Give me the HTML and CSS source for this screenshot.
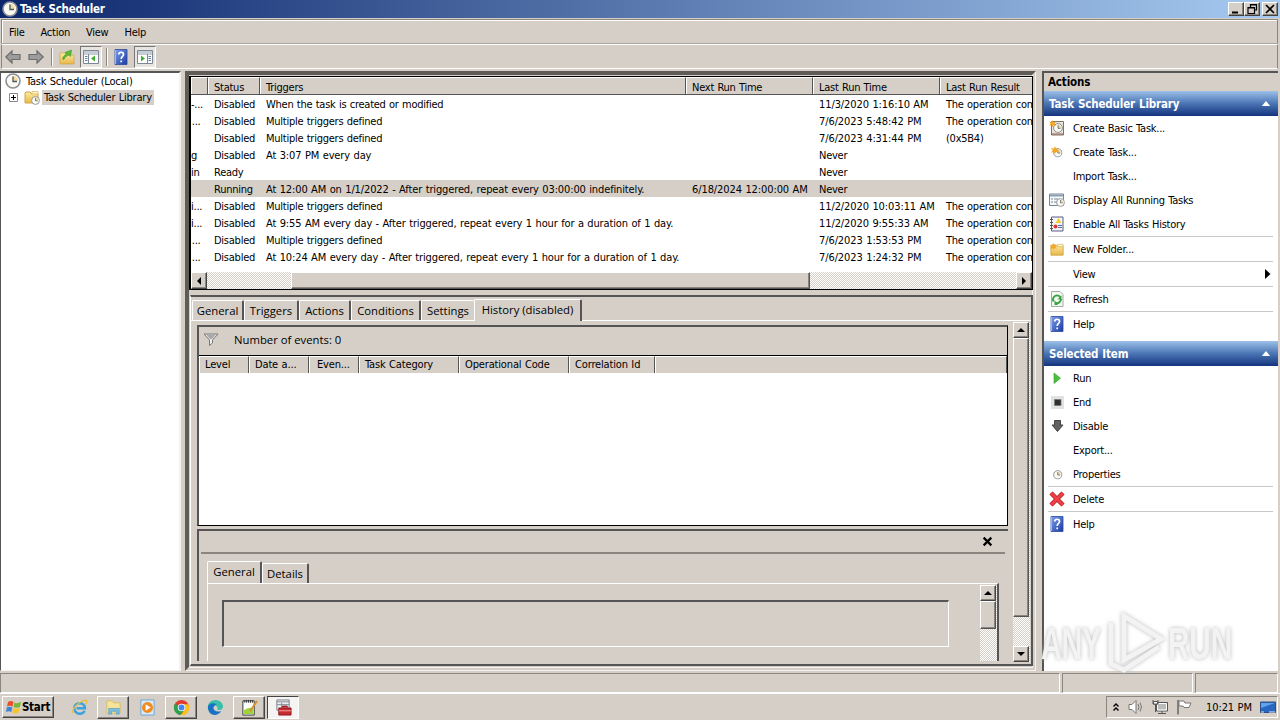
FILE: index.html
```html
<!DOCTYPE html>
<html lang="en">
<head>
  <meta charset="UTF-8">
  <title>Task Scheduler</title>
  <link rel="stylesheet" href="styles.css">
</head>
<body>

  <svg class="defs">
    <defs>
      <linearGradient id="blue" x2="1" y2="1"><stop offset="0" stop-color="#7da2ee"/><stop offset="1" stop-color="#1b3aa0"/></linearGradient>
      <linearGradient id="folderfill" y2="1" x2="0"><stop offset="0" stop-color="#fdebA0"/><stop offset="1" stop-color="#e8b84a"/></linearGradient>
    </defs>
    <symbol id="clock" viewBox="0 0 16 16">
      <circle cx="8" cy="8" r="7" fill="#fafaf2" stroke="#8b8f96" stroke-width="1.6"/>
      <path d="M8 8V3A5 5 0 0 1 13 8z" fill="#f3dca0"/>
      <path d="M8 3.5V8.5H12" fill="none" stroke="#4d5966" stroke-width="1.3"/>
    </symbol>
    <symbol id="folder" viewBox="0 0 16 16">
      <path d="M1 4L2 3H6L7 4.500H14V14H1z" fill="url(#folderfill)" stroke="#d1a548"/>
      <path d="M8 2.500H14V5H8z" fill="#fff5c8" stroke="#d8b45c" stroke-width=".7"/>
    </symbol>
    <symbol id="star" viewBox="0 0 8 8">
      <path d="M4 0L5 2.500L8 2L6.200 4.200L8 6.500L5 6L4 8L3 6L0 6.500L1.800 4.200L0 2L3 2.500z" fill="#f5a623"/>
    </symbol>
    <symbol id="help" viewBox="0 0 16 16">
      <path d="M2 .5H14V15.500H2z" fill="url(#blue)" stroke="#2846a0" stroke-width=".8"/>
      <path d="M2.500 1V15" stroke="#9db7f0"/>
      <path d="M5.800 5.600C5.800 2.500 10.500 2.500 10.500 5.400C10.500 7.500 8.200 7.400 8.200 10M8.200 11.500V13.200" fill="none" stroke="#fff" stroke-width="1.7"/>
    </symbol>
    <symbol id="arrow" viewBox="0 0 16 16">
      <path d="M.8 8L7 2V5.500H15V10.500H7V14z" fill="#9c9c9c" stroke="#6d6d6d" stroke-width="1.200"/>
    </symbol>
    <symbol id="pane" viewBox="0 0 16 16">
      <path d="M.5 1.500H15.500V14.500H.5z" fill="#fff" stroke="#7b8794"/>
      <path d="M1 3H15M1 5H15" stroke="#8f9cab" stroke-width="1.200"/>
      <path d="M5.500 5V14" stroke="#7b8794"/>
      <path d="M2 7.500H4.500M2 9.500H4.500M2 11.500H4.500" stroke="#5f7fa8"/>
      <path d="M12 6.500V12.500L8 9.500z" fill="#3fae2f"/>
    </symbol>
  </svg>

  <header class="titlebar">
    <svg class="i16"><use href="#clock"/></svg>
    <span>Task Scheduler</span>
    <div class="winbtns">
      <button><svg viewBox="0 0 12 10"><path d="M2 8.500H8" stroke="#000" stroke-width="2"/></svg></button>
      <button><svg viewBox="0 0 12 10"><path d="M4.500 3V.5H10.500V6H8.500M4 1H11M2 3.500H8.500V9.500H2zM1.500 4H9" fill="none" stroke="#000" stroke-width="1.200"/></svg></button>
      <button class="gap"><svg viewBox="0 0 12 10"><path d="M2 1L10 9M10 1L2 9" stroke="#000" stroke-width="1.700"/></svg></button>
    </div>
  </header>

  <nav class="menu"><span>File</span><span>Action</span><span>View</span><span>Help</span></nav>

  <div class="toolbar">
    <svg class="tool"><use href="#arrow"/></svg>
    <svg class="tool flip fwd"><use href="#arrow"/></svg>
    <i class="tsep"></i>
    <svg class="tool" viewBox="0 0 16 16"><path d="M1 4H6L7.500 6H15V15H1z" fill="url(#folderfill)" stroke="#d0a347" stroke-width=".7"/><path d="M3.500 10C4 7 6 6 7.500 5L6 3.500L12.500 1L11.500 7.500L9.800 6C7.500 7 6 8 5 10.500z" fill="#58bd32" stroke="#3a8f20" stroke-width=".5"/></svg>
    <span class="pressed"><svg class="i16"><use href="#pane"/></svg></span>
    <i class="tsep second"></i>
    <svg class="tool help"><use href="#help"/></svg>
    <span class="pressed"><svg class="i16 flip"><use href="#pane"/></svg></span>
  </div>

  <main class="workspace">
    <section class="tree">
      <div class="node"><svg class="i16"><use href="#clock"/></svg><span>Task Scheduler (Local)</span></div>
      <div class="node child">
        <svg class="plus" viewBox="0 0 9 9"><path d="M.5 .5H8.500V8.500H.5z" fill="#fff" stroke="#888"/><path d="M2 4.500H7M4.500 2V7" stroke="#000"/></svg>
        <svg class="i16" viewBox="0 0 16 16"><use href="#folder"/><use href="#clock" x="7" y="7" width="9" height="9"/></svg>
        <span class="picked">Task Scheduler Library</span>
      </div>
    </section>

    <section class="center">
      <div class="tasks">
        <div class="trow thead"><span></span><span>Status</span><span>Triggers</span><span>Next Run Time</span><span>Last Run Time</span><span>Last Run Result</span></div>
        <div class="trow"><span>-...</span><span>Disabled</span><span>When the task is created or modified</span><span></span><span class="date">11/3/2020 1:16:10 AM</span><span>The operation com</span></div>
        <div class="trow"><span>&#8202;...</span><span>Disabled</span><span>Multiple triggers defined</span><span></span><span class="date">7/6/2023 5:48:42 PM</span><span>The operation com</span></div>
        <div class="trow"><span></span><span>Disabled</span><span>Multiple triggers defined</span><span></span><span class="date">7/6/2023 4:31:44 PM</span><span>(0x5B4)</span></div>
        <div class="trow"><span>g</span><span>Disabled</span><span class="long">At 3:07 PM every day</span><span></span><span>Never</span><span></span></div>
        <div class="trow"><span>in</span><span>Ready</span><span></span><span></span><span>Never</span><span></span></div>
        <div class="trow on"><span></span><span>Running</span><span class="long">At 12:00 AM on 1/1/2022 - After triggered, repeat every 03:00:00 indefinitely.</span><span class="date">6/18/2024 12:00:00 AM</span><span>Never</span><span></span></div>
        <div class="trow"><span>i...</span><span>Disabled</span><span>Multiple triggers defined</span><span></span><span class="date">11/2/2020 10:03:11 AM</span><span>The operation com</span></div>
        <div class="trow"><span>i...</span><span>Disabled</span><span class="long">At 9:55 AM every day - After triggered, repeat every 1 hour for a duration of 1 day.</span><span></span><span class="date">11/2/2020 9:55:33 AM</span><span>The operation com</span></div>
        <div class="trow"><span>&#8202;...</span><span>Disabled</span><span>Multiple triggers defined</span><span></span><span class="date">7/6/2023 1:53:53 PM</span><span>The operation com</span></div>
        <div class="trow"><span>&#8202;...</span><span>Disabled</span><span class="long">At 10:24 AM every day - After triggered, repeat every 1 hour for a duration of 1 day.</span><span></span><span class="date">7/6/2023 1:24:32 PM</span><span>The operation com</span></div>
        <div class="hscroll">
          <button><svg viewBox="0 0 10 10"><path d="M7 1V9L3 5z"/></svg></button>
          <i class="thumb"></i>
          <button><svg viewBox="0 0 10 10"><path d="M3 1V9L7 5z"/></svg></button>
        </div>
      </div>

      <div class="details">
        <div class="tabs">
          <span class="w1">General</span><span class="w2">Triggers</span><span class="w3">Actions</span><span class="w4">Conditions</span><span class="w5">Settings</span><span class="active">History (disabled)</span>
        </div>
        <div class="page">
          <div class="history">
            <div class="events">
              <div class="count">
                <svg class="i16" viewBox="0 0 16 16"><path d="M1 2H15L9.500 8V11L6.500 13.500V8z" fill="#eee" stroke="#777"/><path d="M3 2.500H13L9 7H7z" fill="#aaa"/></svg>
                <span>Number of events: 0</span>
              </div>
              <div class="ehead"><span>Level</span><span>Date a...</span><span>Even...</span><span>Task Category</span><span>Operational Code</span><span>Correlation Id</span><span></span></div>
              <div class="ebody"></div>
            </div>
            <div class="preview">
              <div class="closebar"><svg viewBox="0 0 10 10"><path d="M1.500 1.500L8.500 8.500M8.500 1.500L1.500 8.500" stroke="#000" stroke-width="2"/></svg></div>
              <div class="subtabs"><span class="active">General</span><span>Details</span></div>
              <div class="subpage">
                <div class="textbox"></div>
                <div class="vscroll small">
                  <button><svg viewBox="0 0 10 10"><path d="M1 7H9L5 3z"/></svg></button>
                  <i class="thumb"></i>
                </div>
              </div>
            </div>
          </div>
          <div class="vscroll">
            <button><svg viewBox="0 0 10 10"><path d="M1 7H9L5 3z"/></svg></button>
            <i class="thumb"></i>
            <button class="last"><svg viewBox="0 0 10 10"><path d="M1 3H9L5 7z"/></svg></button>
          </div>
        </div>
      </div>
    </section>

    <aside class="actions">
      <h2>Actions</h2>
      <h3>Task Scheduler Library<svg viewBox="0 0 10 6"><path d="M0 6H10L5 0z" fill="#fff"/></svg></h3>
      <ul>
        <li><svg class="i16" viewBox="0 0 16 16"><path d="M2.500 1.500H14.500V15H2.500z" fill="#e8e4dc" stroke="#7d7468"/><path d="M3 14H14" stroke="#9a5b4d"/><use href="#clock" x="4" y="3" width="10" height="10"/><use href="#star" width="7" height="7"/></svg>Create Basic Task...</li>
        <li><svg class="i16" viewBox="0 0 16 16"><use href="#clock" x="4" y="4" width="9.500" height="9.500"/><use href="#star" x="2" y="2" width="8" height="8"/></svg>Create Task...</li>
        <li>Import Task...</li>
        <li><svg class="i16" viewBox="0 0 16 16"><path d="M.5 2H14.500V13.500H.5z" fill="#f7faf8" stroke="#7a8794"/><path d="M1 3.500H14" stroke="#8aa0b5" stroke-width="2"/><path d="M2 7H4M5 7H9M2 10H4M5 10H8" stroke="#6e8a9e"/><use href="#clock" x="7" y="6" width="9" height="9"/></svg>Display All Running Tasks</li>
        <li><svg class="i16" viewBox="0 0 16 16"><path d="M2.500 1H14V15H2.500z" fill="#f6f3f8" stroke="#565f86"/><path d="M9.500 2L12.500 7H6.500z" fill="#f4cf27"/><path d="M1 3.500H4M1 6.500H4M1 9.500H4M1 12.500H4" stroke="#555"/><circle cx="6.500" cy="10.500" r="2" fill="#d43c2c"/><path d="M9 9.500H13M9 11.500H13" stroke="#4f6fb5"/></svg>Enable All Tasks History</li>
        <li class="line"><svg class="i16" viewBox="0 0 16 16"><use href="#folder" y="1" x="1" width="15" height="15"/><use href="#star" x="1" y="2" width="7" height="7"/></svg>New Folder...</li>
        <li class="line">View<svg class="more" viewBox="0 0 6 10"><path d="M0 0V10L5.500 5z"/></svg></li>
        <li class="line"><svg class="i16" viewBox="0 0 16 16"><path d="M2.500 .5H11L14 3.500V15.500H2.500z" fill="#f4f8f2" stroke="#a1ada0"/><path d="M4.500 10.500A4 4 0 0 1 11.500 6.500M12 8A4 4 0 0 1 6.500 11.800" fill="none" stroke="#35a33f" stroke-width="1.900"/><path d="M12.500 8.500H8.500L12.500 4.500zM5.500 9V14H9z" fill="#35a33f"/></svg>Refresh</li>
        <li class="line"><svg class="i16"><use href="#help"/></svg>Help</li>
      </ul>
      <h3 class="next">Selected Item<svg viewBox="0 0 10 6"><path d="M0 6H10L5 0z" fill="#fff"/></svg></h3>
      <ul>
        <li><svg class="i16" viewBox="0 0 16 16"><path d="M5 3V13.500L11.500 8.200z" fill="#4ac03c" stroke="#2f9a2b" stroke-width=".6"/></svg>Run</li>
        <li><svg class="i16" viewBox="0 0 16 16"><path d="M2 2H15V15H2z" fill="#e1e2e4"/><path d="M5.500 5.500H12V11.500H5.500z" fill="#303030" stroke="#777" stroke-width=".7"/></svg>End</li>
        <li><svg class="i16" viewBox="0 0 16 16"><path d="M5.500 2.500H11.500V7H14L8.500 13.500L3 7H5.500z" fill="#626262" stroke="#444"/></svg>Disable</li>
        <li>Export...</li>
        <li><svg class="i16" viewBox="0 0 16 16"><use href="#clock" x="4" y="4" width="9.500" height="9.500"/></svg>Properties</li>
        <li class="line"><svg class="i16" viewBox="0 0 16 16"><path d="M2 2L14 14M14 2L2 14" stroke="#b31a20" stroke-width="4.500"/><path d="M2 2L14 14M14 2L2 14" stroke="#ee4046" stroke-width="3"/></svg>Delete</li>
        <li class="line"><svg class="i16"><use href="#help"/></svg>Help</li>
      </ul>
      <svg class="watermark" viewBox="0 0 194 64">
        <g fill="#f3f3f3">
          <text x="1" y="49" textLength="60" lengthAdjust="spacingAndGlyphs">ANY</text>
          <text x="128" y="49" textLength="64" lengthAdjust="spacingAndGlyphs">RUN</text>
        </g>
        <g fill="none" stroke="#f3f3f3" stroke-width="5"><path d="M84 6L121 29L84 50z"/><path d="M71 13V54L84 60L119 37"/></g>
      </svg>
    </aside>
  </main>

  <div class="status"><span></span><span></span><span></span></div>

  <footer class="taskbar">
    <button class="start">
      <svg viewBox="0 0 16 16"><path d="M2 3Q5 1 7.500 3L6.500 7.500Q4 6 1 7.500z" fill="#e8502b"/><path d="M8.500 3.500Q11 5 15 3L14 8Q10.500 9.500 7.500 8z" fill="#7ab738"/><path d="M.8 8.500Q4 7 6.300 8.500L5.300 13Q3 11.500 0 13z" fill="#3b83d6"/><path d="M7.300 9Q10.500 10.500 13.700 9L12.500 13.500Q9 15.500 6.200 13.500z" fill="#f7c42c"/></svg>Start
    </button>
    <div class="apps">
      <span><svg viewBox="0 0 18 18"><path d="M14.500 12.500C11 18 3.500 15.500 3.500 9.500C3.500 3 14.500 2.500 14.800 9.800H6" fill="none" stroke="#3ba3df" stroke-width="2.600"/><path d="M2 15C-1 12 10 1 16 1.500C18 2 16 5 15 6" fill="none" stroke="#e9be3c" stroke-width="1.300"/></svg></span>
      <span class="raised"><svg viewBox="0 0 18 18"><path d="M2 2H8L9 4H16V15H2z" fill="#f7e49b" stroke="#d9bd62"/><path d="M4 16V10H15V16H12V13H7V16z" fill="#7fbfe2" stroke="#4c96bf" stroke-width=".7"/></svg></span>
      <span><svg viewBox="0 0 18 18"><path d="M2 1H16V17H2z" fill="#d5e9f8" stroke="#6aa6d2"/><circle cx="9" cy="9" r="5.800" fill="#f28a1c"/><path d="M7 5.500V12.500L12.500 9z" fill="#fff"/></svg></span>
      <span class="raised"><svg viewBox="0 0 18 18"><circle cx="9" cy="9" r="8" fill="#e23b2e"/><path d="M9 9L2 5A8 8 0 0 0 8 17L12 11z" fill="#2da24c"/><path d="M8 17A8 8 0 0 0 16.200 5.500H9L12.500 11z" fill="#fbc116"/><circle cx="9" cy="9" r="4" fill="#fff"/><circle cx="9" cy="9" r="3.100" fill="#4386ef"/></svg></span>
      <span><svg viewBox="0 0 18 18"><path d="M1 10C0 4 5 1 9 1C14 1 17 5 17 8C17 12 12 12.500 11 11C12 8 9 6 6 7C3 8 1 10 1 10z" fill="#38bfa9"/><path d="M1 9C1 5 7 3 10 6C4 8 7 15 15 13C10 20 1 17 1 9z" fill="#1973c4"/></svg></span>
      <span class="raised"><svg viewBox="0 0 18 18"><path d="M2 2H14V17H2z" fill="#fff" stroke="#333"/><path d="M4 1V4M6 1V4M8 1V4M10 1V4M12 1V4" stroke="#333"/><path d="M3 12Q8 8 13 10V16H3z" fill="#9ed33d"/><path d="M17 2L9.500 13" stroke="#d69128" stroke-width="2"/></svg></span>
      <span class="sunk"><svg viewBox="0 0 18 18"><path d="M2 1H15V12H2z" fill="#edf1f4" stroke="#727d87"/><path d="M2 3H15M2 6H15M7 4V10" stroke="#7d8790"/><path d="M8 9V7.500H13V9M4 9.500H17V17H4z" fill="#c62c32" stroke="#8e171e"/><path d="M4 12.500H17" stroke="#f3b0a9"/></svg></span>
    </div>
    <div class="tray">
      <svg class="chev" viewBox="0 0 8 10"><path d="M1.500 4.500L4 2L6.500 4.500M1.500 8.500L4 6L6.500 8.500" fill="none" stroke="#000" stroke-width="1.400"/></svg>
      <svg viewBox="0 0 16 16"><path d="M1 5.500H4L8 1.500V14.500L4 10.500H1z" fill="#fff" stroke="#777"/><path d="M10 5Q12 8 10 11M12 3.500Q15 8 12 12.500" fill="none" stroke="#777"/></svg>
      <svg viewBox="0 0 16 16"><path d="M4.500 3.500H15.500V12H4.500z" fill="#bbb" stroke="#555"/><path d="M5.500 4.500H14.500V11H5.500z" fill="none" stroke="#fff"/><path d="M10 12V14M6 14.500H14" stroke="#555"/><path d="M1 1V5H6V1M3.500 5V13" fill="none" stroke="#555"/><path d="M1.500 2.500H5.500V5H1.500z" fill="#fff" stroke="#555"/></svg>
      <svg viewBox="0 0 16 16"><path d="M2 1V15.500" stroke="#666" stroke-width="1.500"/><path d="M3 2H8L9 4H15L13 8.500H8L7 7H3z" fill="#fff" stroke="#777"/></svg>
      <span>10:21 PM</span>
      <svg class="desk" viewBox="0 0 16 16"><path d="M.5 3H15.500V13.500H.5z" fill="#2867bf" stroke="#2e4f83"/><path d="M1 4H15L1 9z" fill="#63a1ea"/><path d="M1 13H4M9 13H15" stroke="#dce8f6"/></svg>
    </div>
  </footer>

</body>
</html>
```
FILE: styles.css
```css
* {
  box-sizing: border-box;
}
body {
  margin: 0;
  width: 1280px;
  height: 720px;
  overflow: hidden;
  display: flex;
  flex-direction: column;
  background: #d5cfc8;
  color: #000;
  font-family: Tahoma, "DejaVu Sans Condensed", "DejaVu Sans", sans-serif;
  font-size: 11px;
  font-stretch: condensed;
  letter-spacing: -0.25px;
  word-spacing: 0.5px;
  white-space: nowrap;
}
svg {
  display: block;
  flex: none;
}
.defs {
  width: 0;
  height: 0;
  position: absolute;
}
.i16 {
  width: 16px;
  height: 16px;
}
.flip {
  transform: scaleX(-1);
}
button {
  padding: 0;
  font: inherit;
  letter-spacing: inherit;
  background: #d5cfc8;
  border: 1px solid;
  border-color: #fff #444 #444 #fff;
  box-shadow: inset -1px -1px #8a857e;
  display: flex;
  align-items: center;
  justify-content: center;
}

/* title, menu, toolbar */
.titlebar {
  height: 18px;
  flex: none;
  display: flex;
  align-items: center;
  gap: 2px;
  padding-left: 2px;
  background: linear-gradient(90deg, #0c266c, #a6caf0);
  color: #fff;
  font-weight: bold;
  font-size: 11.5px;
}
.winbtns {
  margin-left: auto;
  display: flex;
  padding-right: 2px;
}
.winbtns button {
  width: 16px;
  height: 14px;
}
.winbtns svg {
  width: 12px;
  height: 10px;
}
.winbtns .gap {
  margin-left: 2px;
}
.menu {
  height: 25px;
  flex: none;
  margin: 1px 2px 0 1px;
  border-top: 1px solid #8a857e;
  border-left: 1px solid #8a857e;
  border-right: 1px solid #8a857e;
  box-shadow: inset 1px 1px #fff;
  display: flex;
  align-items: center;
  gap: 16px;
  padding-left: 7px;
}
.toolbar {
  height: 25px;
  flex: none;
  margin: 0 2px 0 1px;
  border: 1px solid #8a857e;
  border-top-color: #fff;
  border-bottom-color: #fff;
  display: flex;
  align-items: center;
  padding-left: 3px;
  box-shadow: 0 -1px #aaa59e;
}
.tool {
  width: 16px;
  height: 16px;
}
.fwd {
  margin-left: 7px;
}
.tsep {
  width: 2px;
  height: 18px;
  margin: 0 6px 0 7px;
  border-left: 1px solid #8a857e;
  border-right: 1px solid #fff;
}
.tsep.second {
  margin: 0 5px 0 4px;
}
.pressed {
  width: 22px;
  height: 22px;
  margin-left: 5px;
  border: 1px solid;
  border-color: #777 #fff #fff #777;
  background: #e8e5e1;
  display: flex;
  align-items: center;
  justify-content: center;
}

/* three panes */
.workspace {
  height: 600px;
  flex: none;
  margin-top: 2px;
  display: flex;
}
.tree {
  width: 181px;
  height: 600px;
  border: 1px solid;
  border-width: 2px 2px 1px 1px;
  border-color: #555 #f4f2ef #f4f2ef #555;
  background: #fff;
  padding-left: 4px;
  letter-spacing: -0.22px;
}
.node {
  height: 16px;
  display: flex;
  align-items: center;
  gap: 5px;
}
.child {
  padding-left: 4px;
}
.plus {
  width: 9px;
  height: 9px;
}
.child .i16 {
  margin-left: 1px;
}
.picked {
  background: #d5cfc8;
  padding: 1px 2px;
  margin-left: -3px;
}

.center {
  width: 851px;
  margin-left: 4px;
  border: 4px double;
  border-color: #5f5b57 #f4f2ef #f4f2ef #5f5b57;
  border-left-style: solid;
  border-top-style: solid;
  padding-top: 1px;
}
.tasks {
  width: 844px;
  height: 214px;
  border: 1px solid #000;
  border-left-width: 2px;
  background: #fff;
  overflow: hidden;
  display: flex;
  flex-direction: column;
}
.trow {
  height: 17px;
  flex: none;
  display: grid;
  grid-template-columns: 17px 52px 426px 127px 127px 92px;
  line-height: 15px;
}
.trow span {
  overflow: hidden;
  padding: 2px 0 0 6px;
}
.trow span:first-child {
  padding-left: 0;
}
.trow .long {
  letter-spacing: -0.13px;
}
.trow .date {
  letter-spacing: -0.1px;
}
.on {
  background: #d5cfc8;
}
.thead {
  height: 18px;
  border-bottom: 1px solid #555;
}
.thead span,
.ehead span {
  background: #d5cfc8;
  border: 1px solid;
  border-color: #fff #555 #999 #fff;
  border-bottom: 0;
  padding-left: 5px;
  line-height: 15px;
}
.thead span:last-child {
  border-right: 0;
}
.ehead span {
  line-height: 16px;
  letter-spacing: -0.15px;
}
.hscroll {
  height: 17px;
  margin-top: 7px;
  display: flex;
}
.hscroll,
.vscroll {
  background: repeating-conic-gradient(#fff 0 25%, #d5cfc8 0 50%) 0 0 / 2px 2px;
}
.hscroll button {
  width: 16px;
}
.hscroll svg,
.vscroll svg {
  width: 10px;
  height: 10px;
}
.thumb {
  background: #d5cfc8;
  border: 1px solid;
  border-color: #fff #555 #555 #fff;
  box-shadow: inset -1px -1px #8a857e;
}
.hscroll .thumb {
  width: 519px;
  margin: 0 auto 0 84px;
}

/* lower half: tabs and event list */
.details {
  margin-top: 5px;
  margin-left: 1px;
  width: 843px;
  height: 371px;
  border: 2px solid #555;
  border-left: 1px solid #fff;
  padding-top: 2px;
}
.tabs {
  display: flex;
  height: 22px;
  align-items: flex-end;
  padding-left: 1px;
  border-bottom: 1px solid #fff;
}
.tabs span,
.subtabs span,
.count {
  font-family: "Open Sans", "Noto Sans", sans-serif;
  font-stretch: normal;
  font-size: 11.3px;
  letter-spacing: 0;
  word-spacing: 0;
}
.tabs span,
.subtabs span {
  height: 20px;
  border-top: 1px solid #fff;
  border-left: 1px solid #fff;
  border-right: 2px solid #555;
  border-radius: 2px 2px 0 0;
  text-align: center;
  line-height: 20px;
}
.tabs .w1 { width: 52px; }
.tabs .w2 { width: 55px; }
.tabs .w3 { width: 52px; }
.tabs .w4 { width: 70px; }
.tabs .w5 { width: 53px; border-right: 0; }
.tabs .active {
  width: 108px;
  height: 22px;
  margin-bottom: -1px;
  line-height: 19px;
  background: #d5cfc8;
}
.page {
  display: flex;
  height: 341px;
  overflow: hidden;
}
.history {
  width: 811px;
  margin-left: 6px;
  padding-top: 4px;
}
.events {
  height: 201px;
  border: 2px solid #555;
  border-right-width: 1px;
  border-bottom-width: 1px;
  border-color: #555 #000 #000 #555;
}
.count {
  height: 28px;
  display: flex;
  align-items: center;
  gap: 15px;
  padding: 0 0 3px 4px;
}
.ehead {
  display: grid;
  grid-template-columns: 50px 60px 50px 100px 110px 86px 1fr;
  height: 18px;
  border-top: 1px solid #000;
  border-bottom: 1px solid #555;
}
.ehead span:nth-child(3) {
  padding-left: 7px;
}
.ebody {
  height: 152px;
  background: #fff;
}
.preview {
  margin-top: 3px;
  height: 132px;
  border-top: 2px solid #555;
  border-left: 2px solid #555;
  overflow: hidden;
}
.closebar {
  height: 23px;
  margin: 0 3px 0 2px;
  border-bottom: 2px solid #8a857e;
  display: flex;
  justify-content: flex-end;
  align-items: center;
  padding-right: 12px;
}
.closebar svg {
  width: 11px;
  height: 11px;
}
.subtabs {
  display: flex;
  align-items: flex-end;
  height: 29px;
  margin-left: 8px;
}
.subtabs span {
  width: 47px;
}
.subtabs .active {
  width: 55px;
  height: 22px;
}
.subpage {
  display: flex;
  justify-content: space-between;
  height: 100px;
  width: 792px;
  margin-left: 8px;
  border: 1px solid #fff;
  border-right: 2px solid #555;
  padding-left: 14px;
}
.textbox {
  width: 727px;
  height: 47px;
  margin-top: 16px;
  border: 2px solid #555;
  border-right: 1px solid #fff;
  border-bottom: 1px solid #fff;
}
.vscroll {
  width: 17px;
  margin: 1px 0 0 5px;
  display: flex;
  flex-direction: column;
}
.vscroll button {
  height: 16px;
  width: 16px;
}
.vscroll .thumb {
  width: 16px;
  height: 279px;
}
.vscroll .last {
  margin-top: auto;
}
.vscroll.small {
  margin-left: 0;
}
.vscroll.small .thumb {
  height: 28px;
}

/* actions pane */
.actions {
  width: 236px;
  height: 600px;
  margin-left: 6px;
  border-left: 2px solid #555;
  border-top: 2px solid #555;
  background: #fff;
  position: relative;
}
.actions h2,
.actions h3 {
  margin: 0;
  font-size: 11.5px;
  letter-spacing: -0.15px;
}
.actions h2 {
  height: 18px;
  line-height: 18px;
  padding-left: 4px;
  background: #d5cfc8;
}
.actions h3 {
  height: 25px;
  display: flex;
  align-items: center;
  justify-content: space-between;
  padding: 0 7px 0 5px;
  background: linear-gradient(#9cc0e8, #4b75b5 50%, #14347e);
  color: #fff;
}
.actions h3 svg {
  width: 10px;
  height: 5px;
}
.actions .next {
  margin-top: 5px;
}
.actions ul {
  list-style: none;
  margin: 0 5px 0 4px;
  padding: 0;
}
.actions li {
  height: 24px;
  line-height: 22px;
  display: flex;
  align-items: center;
  padding: 2px 0 0 25px;
}
.actions li .i16 {
  margin: -2px 8px 0 -24px;
}
.actions .line {
  height: 25px;
  border-top: 1px solid #c8c8c8;
}
.more {
  width: 6px;
  height: 10px;
  margin: -2px 2px 0 auto;
}
.watermark {
  position: absolute;
  left: -4px;
  top: 537px;
  width: 194px;
  height: 64px;
  filter: drop-shadow(0 0 2px #bbb);
}
.watermark text {
  font: bold 45px "Liberation Sans", sans-serif;
}

/* status and task bar */
.status {
  height: 20px;
  flex: none;
  margin-top: 2px;
  display: grid;
  grid-template-columns: 1060px 131px 1fr;
  gap: 2px;
  padding-right: 2px;
}
.status span {
  border: 1px solid;
  border-color: #8a857e #fff #fff #8a857e;
}
.taskbar {
  flex: 1;
  border-top: 1px solid #fff;
  display: flex;
  align-items: center;
  padding: 0 2px;
}
.start {
  width: 52px;
  height: 22px;
  font-weight: bold;
  font-size: 11.5px;
}
.start svg {
  width: 16px;
  height: 16px;
}
.apps {
  display: flex;
  gap: 2px;
  margin-left: 9px;
}
.apps span {
  width: 32px;
  height: 23px;
  display: flex;
  align-items: center;
  justify-content: center;
}
.apps svg {
  width: 17px;
  height: 17px;
}
.apps .raised {
  border: 1px solid;
  border-color: #fff #444 #444 #fff;
  box-shadow: inset -1px -1px #8a857e;
}
.apps .sunk {
  border: 1px solid;
  border-color: #444 #fff #fff #444;
  background: #f6f4f2;
}
.tray {
  margin-left: auto;
  width: 172px;
  height: 22px;
  border: 1px solid;
  border-color: #8a857e #fff #fff #8a857e;
  display: flex;
  align-items: center;
  gap: 8px;
  padding-left: 5px;
}
.tray svg {
  width: 16px;
  height: 16px;
}
.tray .chev {
  width: 8px;
  height: 10px;
}
.tray span {
  margin-left: 6px;
  letter-spacing: -0.1px;
}
```
